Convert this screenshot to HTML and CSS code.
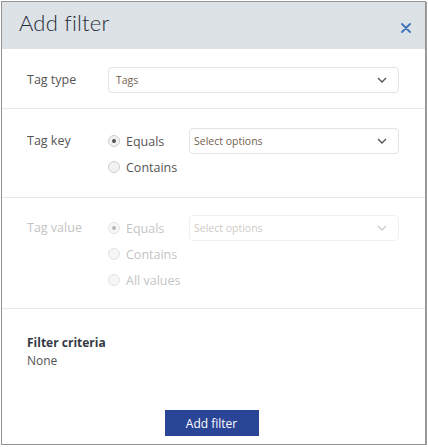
FILE: index.html
```html
<!DOCTYPE html>
<html>
<head>
<meta charset="utf-8">
<link rel="stylesheet" href="styles.css">
</head>
<body>
<div class="dialog">
  <div class="header">
    <h1 class="title">Add filter</h1>
    <svg class="close" width="10" height="10" viewBox="0 0 10 10"><path d="M1 1L9 9M9 1L1 9" stroke="#3d72b8" stroke-width="1.8" stroke-linecap="round"/></svg>
  </div>

  <div class="section s1">
    <div class="label">Tag type</div>
    <div class="select wide">
      <span class="sel-text">Tags</span>
      <svg class="chev" width="10" height="6" viewBox="0 0 10 6"><path d="M1 1L5 5L9 1" fill="none" stroke="#555" stroke-width="1.4"/></svg>
    </div>
  </div>

  <div class="section s2">
    <div class="label">Tag key</div>
    <div class="radios">
      <div class="radio-row"><span class="radio checked"></span>Equals</div>
      <div class="radio-row"><span class="radio"></span>Contains</div>
    </div>
    <div class="select">
      <span class="sel-text">Select options</span>
      <svg class="chev" width="10" height="6" viewBox="0 0 10 6"><path d="M1 1L5 5L9 1" fill="none" stroke="#555" stroke-width="1.4"/></svg>
    </div>
  </div>

  <div class="section s3 disabled">
    <div class="label">Tag value</div>
    <div class="radios">
      <div class="radio-row"><span class="radio checked"></span>Equals</div>
      <div class="radio-row"><span class="radio"></span>Contains</div>
      <div class="radio-row"><span class="radio"></span>All values</div>
    </div>
    <div class="select">
      <span class="sel-text">Select options</span>
      <svg class="chev" width="10" height="6" viewBox="0 0 10 6"><path d="M1 1L5 5L9 1" fill="none" stroke="#ccc" stroke-width="1.4"/></svg>
    </div>
  </div>

  <div class="criteria">
    <div class="crit-title">Filter criteria</div>
    <div class="crit-value">None</div>
  </div>

  <div class="footer">
    <button class="btn">Add filter</button>
  </div>
</div>
</body>
</html>
```

FILE: styles.css
```css
html, body {
  margin: 0;
  padding: 0;
  background: #fff;
}
body {
  font-family: "Open Sans", "Liberation Sans", sans-serif;
}
.dialog {
  margin: 1px 0 0 1px;
  width: 423px;
  height: 442px;
  border: 1px solid #939393;
  box-shadow: 1px 1px 0 #a0a0a0;
  display: flex;
  flex-direction: column;
  background: #fff;
}
.header {
  height: 47px;
  background: #dde2e7;
  display: flex;
  align-items: center;
  justify-content: space-between;
  padding: 0 14px 0 17px;
  flex-shrink: 0;
}
.title {
  margin: 0;
  font-family: "Lato", "Open Sans", sans-serif;
  font-weight: 300;
  font-size: 22px;
  color: #262c36;
  letter-spacing: 0.2px;
  position: relative;
  top: -3px;
}
.close {
  margin-top: 4px;
}
.section {
  display: flex;
  align-items: flex-start;
  border-bottom: 1px solid #e8e8e8;
  padding-left: 25px;
  flex-shrink: 0;
  box-sizing: border-box;
}
.s1 {
  padding-top: 18px;
  height: 60px;
}
.s2 {
  padding-top: 19px;
  height: 89px;
}
.s3 {
  padding-top: 17px;
  height: 111px;
}
.label {
  width: 81px;
  font-size: 12.5px;
  color: #555;
  line-height: 26px;
}
.radios {
  width: 81px;
  display: flex;
  flex-direction: column;
}
.radio-row {
  height: 26px;
  display: flex;
  align-items: center;
  font-size: 12.5px;
  color: #555;
}
.radio {
  width: 10px;
  height: 10px;
  border-radius: 50%;
  border: 1px solid #cfcfcf;
  background: #f2f2f2;
  margin-right: 6px;
  display: flex;
  align-items: center;
  justify-content: center;
  box-sizing: content-box;
}
.radio.checked::after {
  content: "";
  width: 4px;
  height: 4px;
  border-radius: 50%;
  background: #555;
}
.select {
  width: 210px;
  height: 26px;
  box-sizing: border-box;
  border: 1px solid #e3e3e3;
  border-radius: 4px;
  display: flex;
  align-items: center;
  justify-content: space-between;
  padding: 0 11px 0 4px;
}
.select.wide {
  width: 291px;
  padding-left: 7px;
}
.sel-text {
  font-size: 10.5px;
  color: #74604f;
}
.disabled .label,
.disabled .radio-row {
  color: #c4c4c4;
}
.disabled .radio {
  border-color: #e2e2e2;
  background: #f6f6f6;
}
.disabled .radio.checked::after {
  background: #b8b8b8;
}
.disabled .select {
  border-color: #f0f0f0;
}
.disabled .sel-text {
  color: #cfcac6;
}
.criteria {
  padding: 24px 0 0 25px;
  height: 78px;
  box-sizing: border-box;
}
.crit-title {
  font-size: 12px;
  font-weight: 700;
  color: #333a44;
  line-height: 19px;
}
.crit-value {
  font-size: 12px;
  color: #555;
  line-height: 18px;
}
.footer {
  display: flex;
  justify-content: center;
  padding-top: 23px;
}
.btn {
  width: 94px;
  height: 26px;
  background: #2b4596;
  border: none;
  color: #fff;
  font-family: "Open Sans", "Liberation Sans", sans-serif;
  font-size: 12px;
  padding: 0;
  margin-right: 4px;
}
```
